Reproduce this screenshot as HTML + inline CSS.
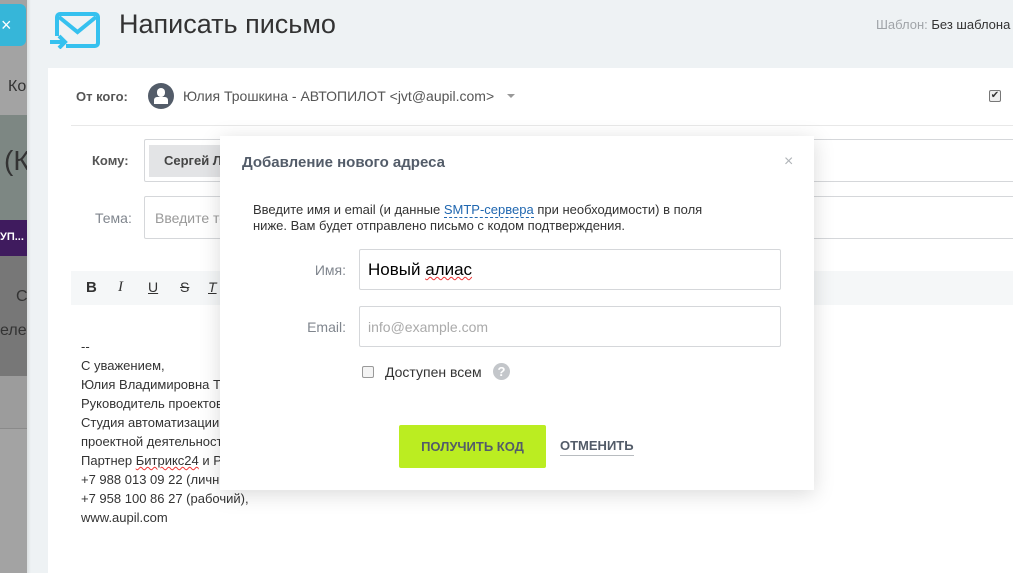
<!DOCTYPE html>
<html><head><meta charset="utf-8"><style>
*{margin:0;padding:0;box-sizing:border-box}
body{width:1013px;height:573px;overflow:hidden;background:#eef2f4;font-family:"Liberation Sans",Arial,sans-serif;position:relative;color:#333}
.a{position:absolute;white-space:nowrap}
</style></head><body>
<!-- left strip -->
<div class="a" style="left:0;top:0;width:27px;height:573px;overflow:hidden;background:#a3a3a3">
<div class="a" style="left:0;top:115px;width:27px;height:105px;background:#7d8783"></div>
<div class="a" style="left:0;top:220px;width:27px;height:36px;background:#3f1b5e"></div>
<div class="a" style="left:0;top:256px;width:27px;height:120px;background:#777"></div>
<div class="a" style="left:0;top:376px;width:27px;height:52px;background:#9c9c9c"></div>
<div class="a" style="left:0;top:428px;width:27px;height:1px;background:#8a8a8a"></div>
<div class="a" style="left:0;top:4px;width:26px;height:42px;background:#36b6d9;border-radius:0 6px 6px 0;color:#fff;font-size:18px;line-height:42px;padding-left:1px">×</div>
<div class="a" style="left:8px;top:78px;font-size:16px;color:#333">Ко</div>
<div class="a" style="left:4px;top:145px;font-size:28px;color:#333">(К</div>
<div class="a" style="left:0;top:231px;font-size:11px;color:#fff;font-weight:bold">УП...</div>
<div class="a" style="left:16px;top:288px;font-size:16px;color:#333">С</div>
<div class="a" style="left:0;top:322px;font-size:16px;color:#333">елей</div>
</div>
<div class="a" style="left:27px;top:0;width:4px;height:573px;background:linear-gradient(90deg,rgba(0,0,0,.08),transparent)"></div>
<!-- header -->
<svg class="a" style="left:50px;top:12px" width="51" height="37" viewBox="0 0 51 37"><rect x="7" y="2" width="41" height="32" rx="3" fill="none" stroke="#35c1ef" stroke-width="4"/><path d="M9 5 L27.5 20 L46 5" fill="none" stroke="#35c1ef" stroke-width="4"/><rect x="0" y="24" width="16" height="12" fill="#eef2f4"/><path d="M0 30 H14 M9 24 L15 30 L9 36" fill="none" stroke="#35c1ef" stroke-width="4"/></svg>
<div class="a" style="left:119px;top:9px;font-size:27px;color:#333">Написать письмо</div>
<div class="a" style="left:876px;top:17px;font-size:13px;color:#a0a4a8">Шаблон: <span style="color:#333">Без шаблона</span></div>
<!-- panel -->
<div class="a" style="left:48px;top:68px;width:965px;height:505px;background:#fff"></div>
<div class="a" style="left:76px;top:89px;font-size:13px;font-weight:bold;color:#555">От кого:</div>
<div class="a" style="left:148px;top:83px;width:26px;height:26px;border-radius:50%;background:#535c69;overflow:hidden"><div style="position:absolute;left:9px;top:5px;width:8px;height:9px;border-radius:4px;background:#fff"></div><div style="position:absolute;left:6px;top:14px;width:14px;height:7px;background:#fff;border-radius:3px 3px 0 0"></div></div>
<div class="a" style="left:183px;top:88px;font-size:14px;color:#555">Юлия Трошкина - АВТОПИЛОТ &lt;jvt@aupil.com&gt;</div>
<div class="a" style="left:507px;top:94px;border:4px solid transparent;border-top:4px solid #999;border-bottom:0"></div>
<div class="a" style="left:989px;top:90px;width:12px;height:12px;border:1px solid #777;border-radius:2px;background:#eee;font-size:10px;line-height:10px;text-align:center">✔</div>
<div class="a" style="left:71px;top:125px;width:942px;height:1px;background:#e8e8e8"></div>
<div class="a" style="left:92px;top:153px;font-size:13px;font-weight:bold;color:#555">Кому:</div>
<div class="a" style="left:144px;top:139px;width:880px;height:43px;border:1px solid #d5d7da;border-radius:2px"></div>
<div class="a" style="left:149px;top:145px;width:80px;height:32px;background:#e3e4e6;font-size:13px;font-weight:bold;color:#444;padding:8px 0 0 15px">Сергей Л</div>
<div class="a" style="left:95px;top:210px;font-size:14px;color:#80868e">Тема:</div>
<div class="a" style="left:144px;top:196px;width:880px;height:43px;border:1px solid #d5d7da;border-radius:2px;font-size:14px;color:#999;padding:13px 0 0 10px">Введите тему</div>
<div class="a" style="left:71px;top:271px;width:942px;height:34px;background:#f5f7f8"></div>
<div class="a" style="left:86px;top:279px;font-size:15px;font-weight:bold;color:#333">B</div>
<div class="a" style="left:118px;top:279px;font-size:15px;font-style:italic;font-family:'Liberation Serif',serif;color:#333">I</div>
<div class="a" style="left:148px;top:279px;font-size:14px;text-decoration:underline;color:#333">U</div>
<div class="a" style="left:180px;top:279px;font-size:14px;text-decoration:line-through;color:#333">S</div>
<div class="a" style="left:208px;top:279px;font-size:14px;font-style:italic;text-decoration:underline;color:#333">T</div>
<div class="a" style="left:81px;top:337px;font-size:13px;line-height:19px;color:#333;white-space:normal;width:300px">--<br>С уважением,<br>Юлия Владимировна Трошкина<br>Руководитель проектов<br>Студия автоматизации<br>проектной деятельности<br>Партнер <span style="text-decoration:underline wavy #e33;text-decoration-thickness:1px">Битрикс24</span> и Р<br>+7 988 013 09 22 (личный),<br>+7 958 100 86 27 (рабочий),<br>www.aupil.com</div>
<!-- modal -->
<div class="a" style="left:220px;top:136px;width:594px;height:354px;background:#fff;box-shadow:0 4px 20px rgba(0,0,0,.15)">
<div class="a" style="left:22px;top:18px;font-size:15px;font-weight:bold;color:#535c69">Добавление нового адреса</div>
<div class="a" style="left:564px;top:17px;font-size:16px;color:#b0b4b8">×</div>
<div class="a" style="left:33px;top:66px;font-size:13px;line-height:16px;color:#333">Введите имя и email (и данные <span style="color:#2067b0;border-bottom:1px dashed #2067b0">SMTP-сервера</span> при необходимости) в поля<br>ниже. Вам будет отправлено письмо с кодом подтверждения.</div>
<div class="a" style="left:90px;top:126px;width:36px;text-align:right;font-size:14px;color:#80868e">Имя:</div>
<div class="a" style="left:139px;top:113px;width:422px;height:41px;border:1px solid #d5d7da;border-radius:2px;font-size:17px;color:#000;padding:10px 0 0 8px">Новый <span style="text-decoration:underline wavy #e33;text-decoration-thickness:1px">алиас</span></div>
<div class="a" style="left:70px;top:183px;width:56px;text-align:right;font-size:14px;color:#80868e">Email:</div>
<div class="a" style="left:139px;top:170px;width:422px;height:41px;border:1px solid #d5d7da;border-radius:2px;font-size:14px;color:#aaa;padding:12px 0 0 8px">info@example.com</div>
<div class="a" style="left:142px;top:230px;width:12px;height:12px;border:1px solid #999;border-radius:2px;background:#f4f4f4"></div>
<div class="a" style="left:165px;top:228px;font-size:14px;color:#333">Доступен всем</div>
<div class="a" style="left:273px;top:227px;width:17px;height:17px;border-radius:50%;background:#c3c6ca;color:#fff;font-size:13px;font-weight:bold;text-align:center;line-height:17px">?</div>
<div class="a" style="left:179px;top:289px;width:147px;height:43px;background:#bbed21;border-radius:2px;font-size:13px;font-weight:bold;color:#535c69;text-align:center;line-height:43px">ПОЛУЧИТЬ КОД</div>
<div class="a" style="left:340px;top:302px;font-size:13px;font-weight:bold;color:#535c69;border-bottom:1px solid #b8bcc0;padding-bottom:2px">ОТМЕНИТЬ</div>
</div>
</body></html>
